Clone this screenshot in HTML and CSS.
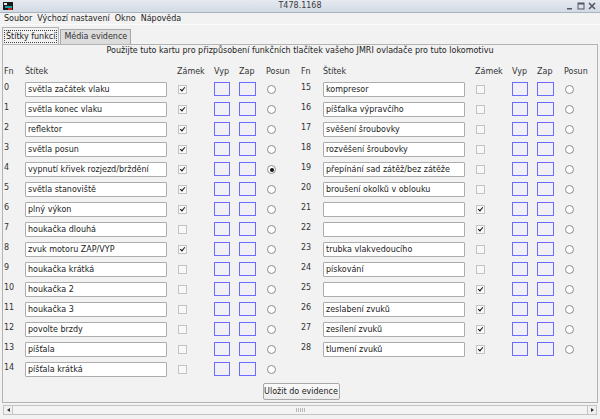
FILE: index.html
```html
<!DOCTYPE html>
<html lang="cs">
<head>
<meta charset="utf-8">
<title>T478.1168</title>
<link rel="stylesheet" href="styles.css">
</head>
<body>
<div class="win">
  <div class="titlebar">
    <svg class="appicon" width="10" height="10" viewBox="0 0 10 10">
      <rect x="0" y="1" width="10" height="8" fill="#1a1a1a"/>
      <rect x="1" y="2" width="3" height="2" fill="#e8e8e8"/>
      <rect x="2" y="5" width="7" height="2" fill="#1aa3a3"/>
      <rect x="5" y="7" width="4" height="2" fill="#d01818"/>
    </svg>
    <span class="title">T478.1168</span>
    <div class="ctrls">
      <svg width="8" height="8" viewBox="0 0 8 8"><rect x="1" y="6" width="5" height="1.5" fill="#556"/></svg>
      <svg width="8" height="8" viewBox="0 0 8 8"><rect x="1" y="1" width="6" height="6" fill="none" stroke="#556" stroke-width="1"/><rect x="1" y="1" width="6" height="1.5" fill="#556"/></svg>
      <svg width="8" height="8" viewBox="0 0 8 8"><path d="M1 1 L7 7 M7 1 L1 7" stroke="#556" stroke-width="1.6"/></svg>
    </div>
  </div>
  <div class="menubar">
    <span class="menu">Soubor</span>
    <span class="menu">Výchozí nastavení</span>
    <span class="menu">Okno</span>
    <span class="menu">Nápověda</span>
  </div>
  <div class="tabs">
    <div class="tab active"><span class="focus">Štítky funkcí</span></div>
    <div class="tab">Média evidence</div>
  </div>
  <div class="panel">
    <div class="intro">Použijte tuto kartu pro přizpůsobení funkčních tlačítek vašeho JMRI ovladače pro tuto lokomotivu</div>
    <div class="cols">
      <div class="fgrid">
        <div class="hd">Fn</div><div class="hd">Štítek</div><div class="hd">Zámek</div><div class="hd">Vyp</div><div class="hd">Zap</div><div class="hd">Posun</div>

        <div class="fn">0</div><div class="lbl"><input class="txt" value="světla začátek vlaku"></div><div><span class="cb on"></span></div><div><span class="sw"></span></div><div><span class="sw z"></span></div><div><span class="rb"></span></div>
        <div class="fn">1</div><div class="lbl"><input class="txt" value="světla konec vlaku"></div><div><span class="cb on"></span></div><div><span class="sw"></span></div><div><span class="sw z"></span></div><div><span class="rb"></span></div>
        <div class="fn">2</div><div class="lbl"><input class="txt" value="reflektor"></div><div><span class="cb on"></span></div><div><span class="sw"></span></div><div><span class="sw z"></span></div><div><span class="rb"></span></div>
        <div class="fn">3</div><div class="lbl"><input class="txt" value="světla posun"></div><div><span class="cb on"></span></div><div><span class="sw"></span></div><div><span class="sw z"></span></div><div><span class="rb"></span></div>
        <div class="fn">4</div><div class="lbl"><input class="txt" value="vypnutí křivek rozjezd/brždění"></div><div><span class="cb on"></span></div><div><span class="sw"></span></div><div><span class="sw z"></span></div><div><span class="rb sel"></span></div>
        <div class="fn">5</div><div class="lbl"><input class="txt" value="světla stanoviště"></div><div><span class="cb on"></span></div><div><span class="sw"></span></div><div><span class="sw z"></span></div><div><span class="rb"></span></div>
        <div class="fn">6</div><div class="lbl"><input class="txt" value="plný výkon"></div><div><span class="cb on"></span></div><div><span class="sw"></span></div><div><span class="sw z"></span></div><div><span class="rb"></span></div>
        <div class="fn">7</div><div class="lbl"><input class="txt" value="houkačka dlouhá"></div><div><span class="cb"></span></div><div><span class="sw"></span></div><div><span class="sw z"></span></div><div><span class="rb"></span></div>
        <div class="fn">8</div><div class="lbl"><input class="txt" value="zvuk motoru ZAP/VYP"></div><div><span class="cb on"></span></div><div><span class="sw"></span></div><div><span class="sw z"></span></div><div><span class="rb"></span></div>
        <div class="fn">9</div><div class="lbl"><input class="txt" value="houkačka krátká"></div><div><span class="cb"></span></div><div><span class="sw"></span></div><div><span class="sw z"></span></div><div><span class="rb"></span></div>
        <div class="fn">10</div><div class="lbl"><input class="txt" value="houkačka 2"></div><div><span class="cb"></span></div><div><span class="sw"></span></div><div><span class="sw z"></span></div><div><span class="rb"></span></div>
        <div class="fn">11</div><div class="lbl"><input class="txt" value="houkačka 3"></div><div><span class="cb"></span></div><div><span class="sw"></span></div><div><span class="sw z"></span></div><div><span class="rb"></span></div>
        <div class="fn">12</div><div class="lbl"><input class="txt" value="povolte brzdy"></div><div><span class="cb"></span></div><div><span class="sw"></span></div><div><span class="sw z"></span></div><div><span class="rb"></span></div>
        <div class="fn">13</div><div class="lbl"><input class="txt" value="píšťala"></div><div><span class="cb"></span></div><div><span class="sw"></span></div><div><span class="sw z"></span></div><div><span class="rb"></span></div>
        <div class="fn">14</div><div class="lbl"><input class="txt" value="píšťala krátká"></div><div><span class="cb"></span></div><div><span class="sw"></span></div><div><span class="sw z"></span></div><div><span class="rb"></span></div>
      </div>
      <div class="fgrid">
        <div class="hd">Fn</div><div class="hd">Štítek</div><div class="hd">Zámek</div><div class="hd">Vyp</div><div class="hd">Zap</div><div class="hd">Posun</div>

        <div class="fn">15</div><div class="lbl"><input class="txt" value="kompresor"></div><div><span class="cb"></span></div><div><span class="sw"></span></div><div><span class="sw z"></span></div><div><span class="rb"></span></div>
        <div class="fn">16</div><div class="lbl"><input class="txt" value="píšťalka výpravčího"></div><div><span class="cb"></span></div><div><span class="sw"></span></div><div><span class="sw z"></span></div><div><span class="rb"></span></div>
        <div class="fn">17</div><div class="lbl"><input class="txt" value="svěšení šroubovky"></div><div><span class="cb"></span></div><div><span class="sw"></span></div><div><span class="sw z"></span></div><div><span class="rb"></span></div>
        <div class="fn">18</div><div class="lbl"><input class="txt" value="rozvěšení šroubovky"></div><div><span class="cb"></span></div><div><span class="sw"></span></div><div><span class="sw z"></span></div><div><span class="rb"></span></div>
        <div class="fn">19</div><div class="lbl"><input class="txt" value="přepínání sad zátěž/bez zátěže"></div><div><span class="cb"></span></div><div><span class="sw"></span></div><div><span class="sw z"></span></div><div><span class="rb"></span></div>
        <div class="fn">20</div><div class="lbl"><input class="txt" value="broušení okolků v oblouku"></div><div><span class="cb"></span></div><div><span class="sw"></span></div><div><span class="sw z"></span></div><div><span class="rb"></span></div>
        <div class="fn">21</div><div class="lbl"><input class="txt" value=""></div><div><span class="cb on"></span></div><div><span class="sw"></span></div><div><span class="sw z"></span></div><div><span class="rb"></span></div>
        <div class="fn">22</div><div class="lbl"><input class="txt" value=""></div><div><span class="cb on"></span></div><div><span class="sw"></span></div><div><span class="sw z"></span></div><div><span class="rb"></span></div>
        <div class="fn">23</div><div class="lbl"><input class="txt" value="trubka vlakvedoucího"></div><div><span class="cb"></span></div><div><span class="sw"></span></div><div><span class="sw z"></span></div><div><span class="rb"></span></div>
        <div class="fn">24</div><div class="lbl"><input class="txt" value="pískování"></div><div><span class="cb"></span></div><div><span class="sw"></span></div><div><span class="sw z"></span></div><div><span class="rb"></span></div>
        <div class="fn">25</div><div class="lbl"><input class="txt" value=""></div><div><span class="cb on"></span></div><div><span class="sw"></span></div><div><span class="sw z"></span></div><div><span class="rb"></span></div>
        <div class="fn">26</div><div class="lbl"><input class="txt" value="zeslabení zvuků"></div><div><span class="cb on"></span></div><div><span class="sw"></span></div><div><span class="sw z"></span></div><div><span class="rb"></span></div>
        <div class="fn">27</div><div class="lbl"><input class="txt" value="zesílení zvuků"></div><div><span class="cb on"></span></div><div><span class="sw"></span></div><div><span class="sw z"></span></div><div><span class="rb"></span></div>
        <div class="fn">28</div><div class="lbl"><input class="txt" value="tlumení zvuků"></div><div><span class="cb on"></span></div><div><span class="sw"></span></div><div><span class="sw z"></span></div><div><span class="rb"></span></div>
      </div>
    </div>
    <div class="actions"><button class="btn">Uložit do evidence</button></div>
  </div>
  <div class="hscroll">
    <span class="arrow left"></span>
    <span class="track"><span class="grip"></span></span>
    <span class="arrow right"></span>
  </div>
</div>
</body>
</html>
```
FILE: styles.css
```css
* { box-sizing: border-box; }
html, body { margin: 0; padding: 0; }
body {
  font-family: "DejaVu Sans", sans-serif;
  font-size: 8px;
  color: #222;
  background: #f2f2f2;
}
.win {
  width: 600px;
  height: 419px;
  background: #f2f2f2;
  display: flex;
  flex-direction: column;
  overflow: hidden;
}
.titlebar {
  height: 13px;
  flex: none;
  display: flex;
  align-items: center;
  position: relative;
  background: linear-gradient(#e6eaf0, #d2dae4);
  border-bottom: 1px solid #a9b4c2;
  padding: 0 4px 0 3px;
}
.appicon { flex: none; position: relative; z-index: 1; }
.title {
  position: absolute;
  left: 0; right: 0;
  text-align: center;
  color: #3a3a3a;
  line-height: 12px;
}
.ctrls {
  margin-left: auto;
  display: flex;
  gap: 3px;
  position: relative;
}
.menubar {
  height: 12px;
  flex: none;
  display: flex;
  align-items: center;
  padding-left: 1px;
  border-bottom: 1px solid #fbfbfb;
}
.menu { padding: 0 2px 0 3px; line-height: 11px; }
.tabs {
  flex: none;
  height: 19px;
  display: flex;
  align-items: flex-end;
  padding-left: 2px;
}
.tab {
  height: 15px;
  padding: 0 3px;
  line-height: 14px;
  background: #dcdcdc;
  border: 1px solid #a8a8a8;
  border-bottom: none;
  margin-left: 1px;
  color: #333;
  white-space: nowrap;
}
.tab.active {
  height: 17px;
  background: #f2f2f2;
  margin-left: 0;
  padding: 2px 1px 0 1px;
  border-color: #b4b4b4;
}
.focus {
  display: block;
  border: 1px dotted #444;
  line-height: 11px;
  padding: 0 1px 0 1px;
  color: #222;
}
.panel {
  flex: none;
  height: 359px;
  margin: 0 2px 0 2px;
  border: 1px solid #b4b4b4;
  display: flex;
  flex-direction: column;
}
.intro {
  height: 12px;
  line-height: 12px;
  text-align: center;
  color: #222;
}
.cols {
  display: flex;
  gap: 3px;
  margin-top: 9px;
}
.fgrid {
  display: grid;
  grid-template-columns: 22px 152px 37px 25px 27px 32px;
  grid-template-rows: 14px;
  grid-auto-rows: 20px;
  width: 295px;
}
.fgrid:first-child .hd:first-child, .fgrid:first-child .fn { padding-left: 1px; }
.hd { line-height: 12px; color: #333; }
.fn { padding-top: 3px; line-height: 9px; color: #333; }
.lbl { padding-top: 2px; }
.txt {
  display: block;
  width: 142px;
  height: 15px;
  margin: 0;
  padding: 0 2px;
  border: 1px solid #acacac;
  border-radius: 1px;
  background: #fff;
  font: inherit;
  color: #222;
  outline: none;
}
.cb {
  display: block;
  width: 9px;
  height: 9px;
  margin: 5px 0 0 1px;
  border: 1px solid #c4c4c4;
  background: #f8f8f8;
  position: relative;
}
.cb.on::after {
  content: "";
  position: absolute;
  left: 2px;
  top: 0px;
  width: 2px;
  height: 4px;
  border-right: 1.4px solid #111;
  border-bottom: 1.4px solid #111;
  transform: rotate(40deg);
}
.sw {
  display: block;
  width: 16px;
  height: 14px;
  margin-top: 2px;
  border: 1px solid #6b6bff;
  background: #f0f0f6;
}
.sw.z { width: 17px; }
.rb {
  display: block;
  width: 9px;
  height: 9px;
  margin: 5px 0 0 1px;
  border: 1px solid #8c8c8c;
  border-radius: 50%;
  background: #fff;
  position: relative;
}
.rb.sel::after {
  content: "";
  position: absolute;
  left: 1.5px; top: 1.5px;
  width: 4px; height: 4px;
  border-radius: 50%;
  background: #111;
}
.actions {
  display: flex;
  justify-content: center;
  margin-top: 3px;
  padding-left: 2px;
}
.btn {
  height: 17px;
  width: 77px;
  padding: 0;
  font: inherit;
  color: #222;
  background: linear-gradient(#fafafa, #ececec);
  border: 1px solid #a8a8a8;
  border-radius: 2px;
}
.hscroll {
  flex: none;
  height: 10px;
  margin: 2px 3px 0 3px;
  display: flex;
  border: 1px solid #c4c4c4;
  background: #f4f4f4;
}
.arrow {
  width: 9px;
  flex: none;
  position: relative;
  background: #f0f0f0;
}
.arrow.left { border-right: 1px solid #c4c4c4; }
.arrow.right { border-left: 1px solid #c4c4c4; }
.arrow::after {
  content: "";
  position: absolute;
  top: 2px;
  border-top: 2.5px solid transparent;
  border-bottom: 2.5px solid transparent;
}
.arrow.left::after { left: 3px; border-right: 3px solid #333; }
.arrow.right::after { left: 3px; border-left: 3px solid #333; }
.track {
  flex: 1;
  display: flex;
  justify-content: center;
  align-items: center;
}
.grip {
  width: 9px;
  height: 4px;
  background: repeating-linear-gradient(90deg, #b8b8b8 0 1px, transparent 1px 2px);
}
```
